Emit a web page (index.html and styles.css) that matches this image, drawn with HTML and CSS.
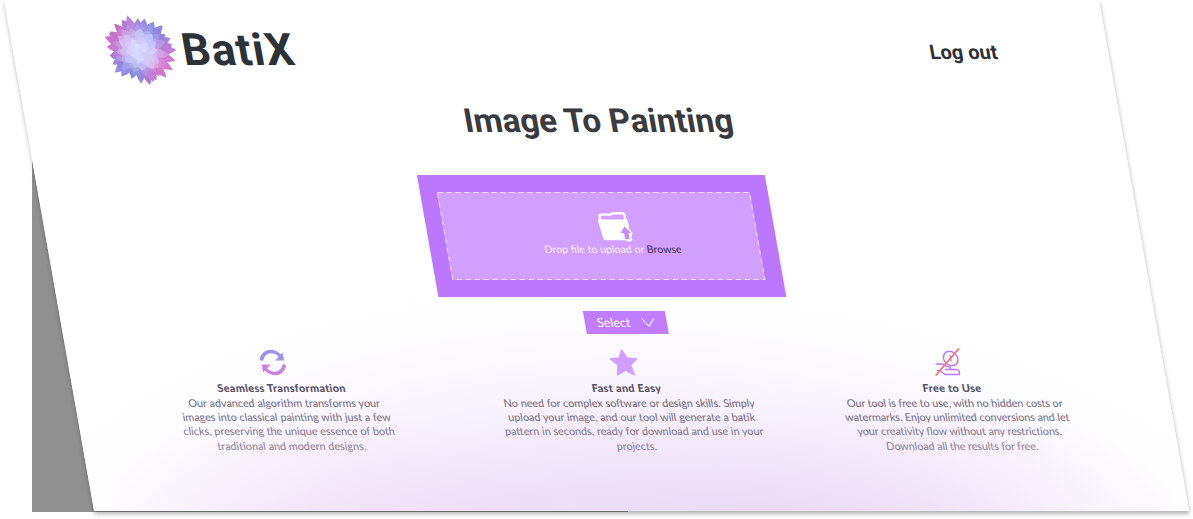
FILE: index.html
```
<!DOCTYPE html>
<html lang="en">
<head>
<meta charset="utf-8">
<title>BatiX</title>
<link rel="stylesheet" href="styles.css">
</head>
<body>
<div class="backdrop"></div>
<main class="panel">
  <header class="topbar">
    <div class="brand">
      <svg class="flower" id="flower" viewBox="-36 -36 72 72"></svg>
      <span class="brand-name">BatiX</span>
    </div>
    <a class="logout">Log out</a>
  </header>
  <h1 class="title">Image To Painting</h1>
  <section class="drop">
    <div class="zone">
      <svg class="border" width="313" height="88"><rect x=".5" y=".5" width="312" height="87"/></svg>
      <svg class="folder" width="34" height="30" viewBox="0 0 34 30">
        <path class="folder-line" d="M2.500 9V4.200Q2.500 2.600 4.200 2.600H13.500L17 1.200H25.500Q27.500 1.200 27.500 3.200V9"/>
        <path class="folder-body" d="M0 8.500Q0 7.600 1 7.600H28.600Q30 7.600 30 9V17L32.500 21L31 24V28Q30.500 29.800 27 29.600Q24.500 29.600 24 28.300H4.500Q2.700 28.300 2.200 26.500Z"/>
        <path class="folder-arrow" d="M25.500 14.500L31 21H28.500V27.300H24V21H20.500Z"/>
      </svg>
      <p class="hint">Drop file to upload or <span class="browse">Browse</span></p>
    </div>
  </section>
  <div class="select"><span>Select</span>
    <svg class="chevron" width="13" height="9" viewBox="0 0 13 9"><path d="M.5 .5L6.500 8.200L12.500 .5"/></svg>
  </div>
  <section class="features">
    <article class="feature">
      <svg class="icon sync" width="26" height="26" viewBox="0 0 26 26">
        <g fill="none" stroke-width="3.600" stroke-linecap="round">
          <path d="M2.300 9.500Q6 2 12.500 2Q18 2 21 6" stroke="#9a94e8"/>
          <path d="M23.700 16.500Q20 24 13.500 24Q8 24 5 20" stroke="#ca84dc"/>
        </g>
        <path d="M24.500 3V11H15.500Z" fill="#9a94e8"/>
        <path d="M1.500 23V15H10.500Z" fill="#ca84dc"/>
      </svg>
      <h2>Seamless Transformation</h2>
      <p><span>Our advanced algorithm transforms your</span><span>images into classical painting with just a few</span><span>clicks, preserving the unique essence of both</span><span>traditional and modern designs.</span></p>
    </article>
    <article class="feature">
      <svg class="icon" width="28" height="27" viewBox="0 0 28 27"><path d="M14 1L17.800 9L27 10L20.300 16L22.300 25.800L14 21.200L5.700 25.800L7.700 16L1 10L10.200 9Z" fill="#d09fff" stroke="#d09fff" stroke-width="1.500" stroke-linejoin="round"/></svg>
      <h2>Fast and Easy</h2>
      <p><span>No need for complex software or design skills. Simply</span><span>upload your image, and our tool will generate a batik</span><span>pattern in seconds, ready for download and use in your</span><span>projects.</span></p>
    </article>
    <article class="feature free">
      <svg class="icon" width="24" height="28" viewBox="0 0 24 28">
        <g fill="none" stroke="#b978f5" stroke-width="1.400" stroke-linecap="round"><circle cx="15.500" cy="10.500" r="7.200"/><path d="M15.500 8V13"/><path d="M0 16H5.500Q8 16 10 18.500H13Q14.500 20.500 12.500 21.500H8.500M13.500 21.500H20Q22.500 22 21.500 26.500H7L2.500 22.500H0"/></g>
        <path d="M-2.500 27.500L25.500 .5" stroke="#f87272" stroke-width="1.700"/>
      </svg>
      <h2>Free to Use</h2>
      <p><span>Our tool is free to use, with no hidden costs or</span><span>watermarks. Enjoy unlimited conversions and let</span><span>your creativity flow without any restrictions.</span><span>Download all the results for free.</span></p>
    </article>
  </section>
</main>
<script src="flower.js"></script>
</body>
</html>
```
FILE: styles.css
```
* { box-sizing: border-box; }
body { margin: 0; width: 1193px; height: 519px; overflow: hidden; background: #fff; font-family: Lato, "Liberation Sans", sans-serif; }
h1, h2, p { margin: 0; }
svg { display: block; flex: none; overflow: visible; }
.backdrop { position: absolute; left: 32px; top: 150px; width: 596px; height: 362px; background: #909090; }
.panel {
  position: relative; display: flex; flex-direction: column; align-items: flex-start;
  width: 1095px; height: 511px; margin-left: 4px;
  transform: skewX(10deg); transform-origin: 0 0;
  background:
    radial-gradient(ellipse 250px 150px at 240px 108%, rgba(232, 200, 238, .35), rgba(232, 200, 238, 0)),
    radial-gradient(ellipse 280px 170px at 820px 108%, rgba(228, 200, 240, .35), rgba(228, 200, 240, 0)),
    radial-gradient(ellipse 640px 290px at 50% 112%, #e7d9f6 0%, #ede0f8 30%, #f8f3fd 62%, #fdfcff 85%, #fff 100%), #fff;
  box-shadow: 0 3px 4px rgba(0, 0, 0, .3);
}
.panel > * { flex: none; }
.topbar { display: flex; justify-content: space-between; width: 100%; height: 100px; padding: 14px 111px 0 91px; }
.brand { display: flex; gap: 6px; }
.flower { width: 72px; height: 72px; }
.brand-name { font: 700 44.500px/73px Roboto, sans-serif; letter-spacing: 1.100px; color: #2d3239; }
.logout { font: 700 20px/76px Roboto, sans-serif; color: #2d3239; }
.title { height: 75px; width: 100%; padding-left: 51px; text-align: center; font: 700 33.200px/41px Roboto, sans-serif; color: #3a3b3f; }
.drop { width: 348px; height: 122px; margin-left: 382px; padding: 17px; background: #bd77ff; }
.zone { position: relative; display: flex; flex-direction: column; align-items: center; width: 313px; height: 88px; padding: 20px 0 0 19px; background: #d09fff; }
.border { position: absolute; left: 0; top: 0; fill: none; stroke: #eedfff; stroke-dasharray: 5 4; }
.folder { margin-left: 14px; }
.folder-line { fill: none; stroke: #fff; stroke-width: 2.400; }
.folder-body { fill: #fff; }
.folder-arrow { fill: #c48cff; }
.hint { font-size: 10.600px; line-height: 14px; color: #f8efff; white-space: nowrap; }
.browse { color: #3f344e; }
.select { display: flex; align-items: center; gap: 12px; width: 82px; height: 23px; margin: 14px 0 0 524px; padding-left: 12px; background: #c07dff; color: #fff; font-size: 12.500px; }
.chevron { fill: none; stroke: #fff; }
.features { display: grid; grid-template-columns: 418px 272px 378px; padding-top: 15px; }
.feature { display: flex; flex-direction: column; align-items: center; text-align: center; white-space: nowrap; }
.feature:nth-child(2) .icon { margin-left: 3px; }
.icon { height: 27px; }
.sync { width: 26px; margin-right: 9px; }
.feature h2 { margin-top: 4px; font-size: 10.900px; line-height: 15px; letter-spacing: .3px; color: #595564; font-weight: 900; }
.feature p { padding-top: 1px; font-size: 10.800px; line-height: 14.200px; color: #6d6878; }
.feature p span { display: block; }
.feature p span:nth-child(2) { color: #726c7d; }
.feature p span:nth-child(3) { color: #7c7589; }
.feature p span:nth-child(4) { color: #888094; }
.free { margin-top: -1px; padding-left: 1px; }
.free .icon { height: 28px; }
.free p { letter-spacing: -.08px; }
```
FILE: flower.js
```
const svg = document.getElementById('flower');
const NS = 'http://www.w3.org/2000/svg';

// Hue stops of the outer petals, by angle in degrees (clockwise from the right)
const hues = [
  [0, [200, 128, 216]], [45, [214, 112, 200]], [75, [196, 126, 216]], [105, [132, 132, 216]],
  [145, [142, 136, 222]], [175, [190, 116, 206]], [225, [204, 114, 202]], [265, [176, 132, 218]],
  [300, [138, 144, 230]], [335, [152, 132, 222]], [360, [200, 128, 216]]
];
const mix = (a, b, t) => a.map((v, i) => v + (b[i] - v) * t);
function colorAt(deg) {
  const d = (deg + 360) % 360;
  const i = hues.findIndex(h => h[0] > d);
  const [a, b] = [hues[i - 1], hues[i]];
  return mix(a[1], b[1], (d - a[0]) / (b[0] - a[0]));
}

let seed = 7;
const rand = () => (seed = (seed * 16807) % 2147483647) / 2147483647;

// Rings from the rim inward: petal count, tip radius, petal width, blend to the pale core
const rings = [
  [24, 37, 7, 0], [24, 33, 7, .06], [19, 29, 7, .2], [17, 25, 8, .42],
  [13, 22, 8, .66], [11, 17, 7, .82], [8, 13, 6, .93], [6, 8, 4, 1]
];
for (const [count, radius, width, pale] of rings) {
  for (let i = 0; i < count; i++) {
    const deg = (i * 360) / count + rand() * 12;
    const r = radius * (.84 + rand() * .16);
    const shade = (rand() - .5) * 14;
    const c = mix(colorAt(deg), [214, 216, 255], pale).map(v => Math.min(255, Math.round(v + shade)));
    const petal = document.createElementNS(NS, 'path');
    petal.setAttribute('d', `M0 0L${r * .7} ${-width * .7}Q${r * .9} ${-width * .4} ${r} 0Q${r * .9} ${width * .4} ${r * .7} ${width * .7}Z`);
    petal.setAttribute('fill', `rgb(${c})`);
    petal.setAttribute('transform', `rotate(${deg})`);
    svg.append(petal);
  }
}
```
